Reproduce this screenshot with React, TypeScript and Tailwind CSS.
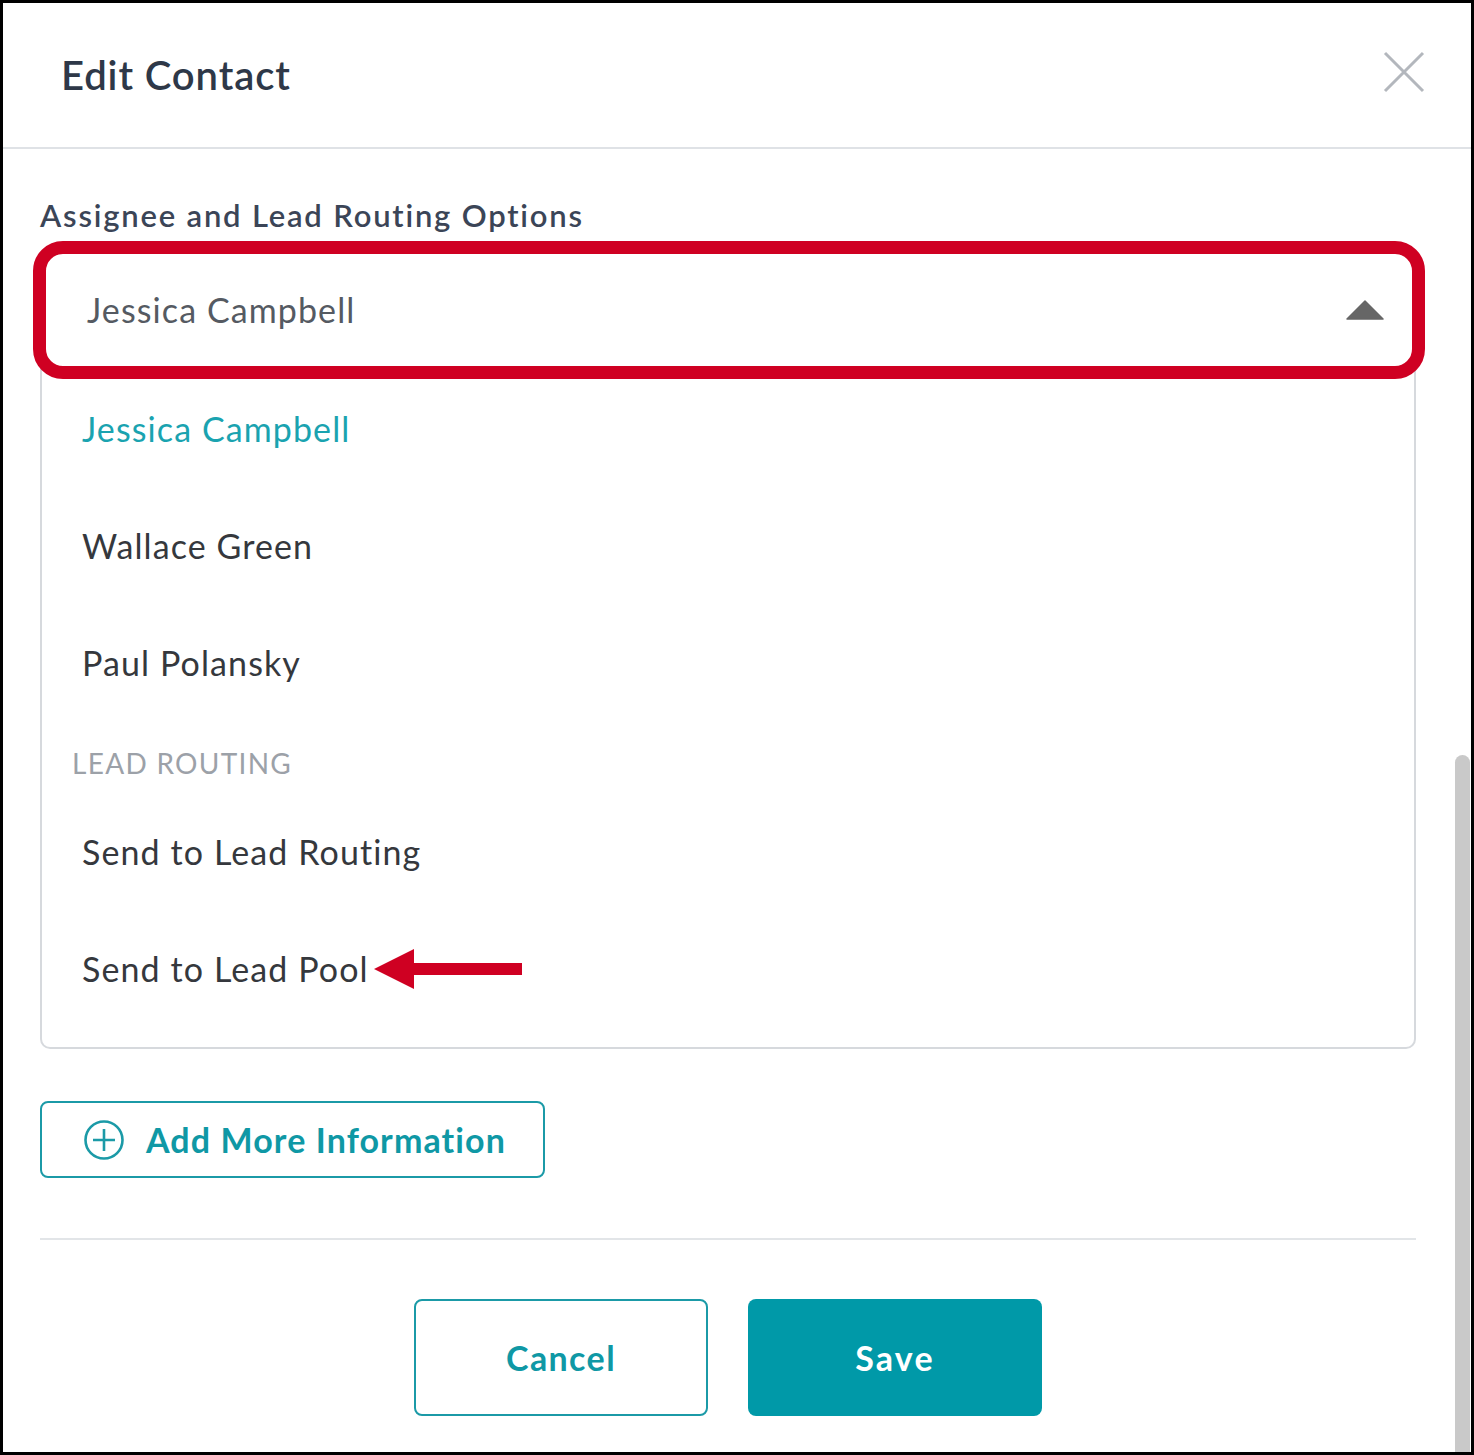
import React from 'react';

const font = { fontFamily: 'Lato, "Noto Sans", sans-serif' };

const assignees = ['Jessica Campbell', 'Wallace Green', 'Paul Polansky'];
const routing = ['Send to Lead Routing', 'Send to Lead Pool'];

const CloseIcon = () => (
  <svg width="42" height="42" viewBox="0 0 42 42" className="text-[#b3b7bd]">
    <path d="M2 2 L40 40 M40 2 L2 40" stroke="currentColor" strokeWidth="3" />
  </svg>
);

const PlusCircle = () => (
  <svg width="42" height="42" viewBox="0 0 42 42" className="text-[#1b9aa7]">
    <circle cx="21" cy="21" r="18.5" fill="none" stroke="currentColor" strokeWidth="2.6" />
    <path d="M21 10 V32 M10 21 H32" stroke="currentColor" strokeWidth="2.6" />
  </svg>
);

const RedArrow = () => (
  <svg width="150" height="42" viewBox="0 0 150 42" className="ml-[5px]">
    <path d="M0 21 L40 1 L40 15 L148 15 L148 27 L40 27 L40 41 Z" fill="#cf0022" />
  </svg>
);

export default function App() {
  return (
    <div style={font} className="relative w-[1474px] h-[1455px] border-[3px] border-black bg-white overflow-hidden flex flex-col">
      {/* Header */}
      <div className="h-[146px] shrink-0 flex items-center justify-between pl-[58px] pr-[46px] border-b-2 border-[#dfe2e6]">
        <h2 className="text-[40px] font-semibold tracking-[0.9px] text-[#2e3848]">Edit Contact</h2>
        <div className="-mt-[6px]">
          <CloseIcon />
        </div>
      </div>

      {/* Body */}
      <div className="pl-[37px] pr-[55px] flex flex-col">
        <div className="mt-[46px] text-[31px] font-semibold tracking-[1.8px] text-[#3b4557] leading-[40px]">
          Assignee and Lead Routing Options
        </div>

        {/* Highlighted select */}
        <div className="relative z-10 -ml-[7px] w-[1392px] h-[138px] mt-[6px] border-[13px] border-[#cf0022] rounded-[30px] bg-white flex items-center justify-between pl-[41px] pr-[28px]">
          <span className="text-[34px] tracking-[1.1px] text-[#555a62] -mt-[2px]">Jessica Campbell</span>
          <svg width="38" height="20" viewBox="0 0 38 20">
            <path d="M19 1 L37 19 L1 19 Z" fill="#666" strokeLinejoin="round" stroke="#666" strokeWidth="1.5" />
          </svg>
        </div>

        {/* Dropdown list */}
        <div className="-mt-[13px] w-[1376px] border-2 border-t-0 border-[#d6d9dd] rounded-b-[10px] pt-[4px] pb-[20px]">
          {assignees.map((name, i) => (
            <div
              key={name}
              className={`h-[117px] flex items-center pl-[40px] text-[34px] tracking-[1.1px] ${i === 0 ? 'text-[#1aa3b0]' : 'text-[#35383d]'}`}
            >
              {name}
            </div>
          ))}
          <div className="h-[72px] flex items-center pl-[30px] pt-[12px] text-[28px] tracking-[1.3px] uppercase text-[#9ca1a8]">
            Lead Routing
          </div>
          {routing.map((name, i) => (
            <div key={name} className="h-[117px] flex items-center pl-[40px] text-[34px] tracking-[1.1px] text-[#35383d]">
              {name}
              {i === 1 && <RedArrow />}
            </div>
          ))}
        </div>

        {/* Add more */}
        <button className="mt-[52px] w-[505px] h-[77px] border-2 border-[#1b9aa7] rounded-[8px] flex items-center pl-[41px] gap-[21px] text-[34px] font-bold tracking-[1.1px] text-[#0f98a5]">
          <PlusCircle />
          <span>Add More Information</span>
        </button>

        <div className="mt-[60px] w-[1376px] h-[2px] bg-[#e2e5e8]" />

        {/* Footer buttons */}
        <div className="mt-[59px] w-[1376px] flex justify-center gap-[40px]">
          <button className="w-[294px] h-[117px] border-2 border-[#1b9aa7] rounded-[8px] bg-white text-[34px] font-bold tracking-[1.4px] text-[#0f98a5]">
            Cancel
          </button>
          <button className="w-[294px] h-[117px] rounded-[8px] bg-[#0099a8] text-[34px] font-bold tracking-[2.2px] text-white">
            Save
          </button>
        </div>
      </div>

      {/* Scrollbar */}
      <div className="absolute right-[1px] top-[752px] bottom-0 w-[15px] rounded-t-[8px] bg-[#c9c9c9]" />
    </div>
  );
}
